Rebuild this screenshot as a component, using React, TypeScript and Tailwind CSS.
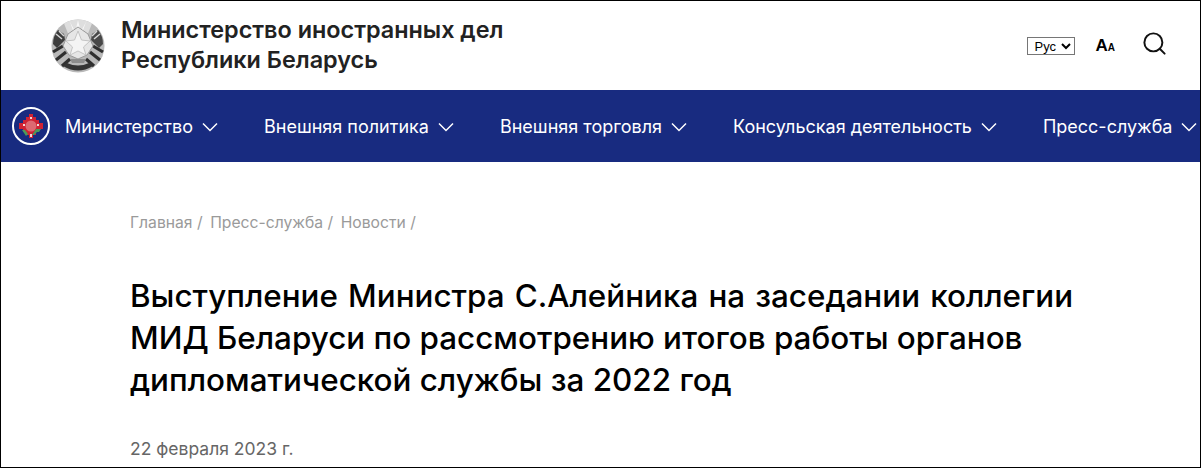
import { Search } from "lucide-react";

const inter = "font-['Inter',sans-serif]";

const navItems = [
  "Министерство",
  "Внешняя политика",
  "Внешняя торговля",
  "Консульская деятельность",
  "Пресс-служба",
];

function Chevron() {
  return (
    <svg width="16" height="10" viewBox="0 0 16 10" fill="none" className="shrink-0">
      <path d="M1 1.5 L8 8.5 L15 1.5" stroke="white" strokeWidth="1.5" />
    </svg>
  );
}

function Emblem() {
  return (
    <svg width="54" height="54" viewBox="0 0 54 54" className="shrink-0">
      <circle cx="27" cy="27" r="26.5" fill="#b9b9b9" />
      {/* rays over the top */}
      <path d="M27 0.5 A26.5 26.5 0 0 1 41 4.5 L36 17 H18 L13 4.5 A26.5 26.5 0 0 1 27 0.5Z" fill="#dedede" />
      <path d="M27 1 L24 14 H30Z M19 3 L23 14 H25Z M35 3 L31 14 H29Z" fill="#f7f7f7" />
      {/* globe patches */}
      <path d="M2 25 Q2 17 7 11 L13 15 L14 21 L6 29Z" fill="#3d3d3d" />
      <path d="M52 25 Q52 17 47 11 L41 15 L40 21 L48 29Z" fill="#484848" />
      <path d="M5 15 L11 20 M8 12 L13 17" stroke="#d5d5d5" strokeWidth="1.5" />
      <path d="M49 15 L43 20 M46 12 L41 17" stroke="#d5d5d5" strokeWidth="1.5" />
      {/* wheat stripes */}
      <g stroke="#2f2f2f" strokeWidth="3.2" fill="none">
        <path d="M2 33 L12 27" />
        <path d="M5 41 L15 33" />
        <path d="M11 47 L19 40" />
        <path d="M52 33 L42 27" />
        <path d="M49 41 L39 33" />
        <path d="M43 47 L35 40" />
      </g>
      {/* map and star */}
      <path d="M27 8 L37 15 L42 27 L36 36 L27 40 L18 36 L12 27 L17 15Z" fill="#e6e6e6" stroke="#9a9a9a" strokeWidth="1" />
      <path d="M27 12 L30.5 21 L39 22 L32.5 28 L35 36 L27 32 L19 36 L21.5 28 L15 22 L23.5 21Z" fill="#f4f4f4" stroke="#c4c4c4" strokeWidth="1" />
      <path d="M19 40 H35 L33 44 H21Z" fill="#8d8d8d" />
      {/* ribbon */}
      <path d="M12 47 Q27 56 42 47 L38 44 Q27 49 16 44Z" fill="#343434" />
    </svg>
  );
}

function NavLogo() {
  return (
    <div className="flex h-[38px] w-[38px] shrink-0 items-center justify-center rounded-full border-[2px] border-white">
      <svg width="26" height="26" viewBox="0 0 26 26">
        <path d="M11 1h4v3h3v3h3v3h4v6h-4v3h-3v3h-3v3h-4v-3H8v-3H5v-3H1v-6h4V7h3V4h3z" fill="#cf2233" />
        <circle cx="13" cy="13" r="5.5" fill="#dd6a72" />
        <path d="M18 16h5l-2 3h-2l-3 3h-2z" fill="#4a9a5a" />
        <path d="M4 17h3l3 4-2 2z" fill="#4a9a5a" />
        <path d="M5 11h2v2H5zM19 11h2v2h-2zM12 4h2v2h-2z" fill="#f0d8d8" />
        <path d="M12 21h2v3h-2z" fill="#f0d8d8" />
      </svg>
    </div>
  );
}

export default function App() {
  return (
    <div className={`${inter} h-[468px] w-[1201px] overflow-hidden border border-black bg-white`}>
      <header className="flex h-[89px] items-center pl-[50px] pr-[32px]">
        <Emblem />
        <div className="mb-[2px] ml-[16px] text-[23.4px] font-semibold leading-[30px] text-[#222]">
          Министерство иностранных дел
          <br />
          Республики Беларусь
        </div>
        <div className="ml-auto flex items-center">
          <select className="mr-[1px] h-[18px] w-[48px] border border-[#767676] bg-white pl-[2px] font-['Liberation_Sans',sans-serif] text-[13px] leading-none text-black">
            <option>Рус</option>
          </select>
          <div className="ml-[19px] flex items-baseline font-['Liberation_Sans',sans-serif] font-bold text-black">
            <span className="text-[17px]">A</span>
            <span className="text-[10px]">A</span>
          </div>
          <Search className="mb-[4px] ml-[26px] text-[#111]" size={27} strokeWidth={1.75} />
        </div>
      </header>
      <nav className="flex h-[72px] items-center overflow-hidden whitespace-nowrap bg-[#182b80] pl-[11px] text-white">
        <NavLogo />
        <ul className="ml-[15px] mt-[1px] flex items-center gap-[46px]">
          {navItems.map((item) => (
            <li key={item} className="flex items-center gap-[9px] text-[18px]">
              {item}
              <Chevron />
            </li>
          ))}
        </ul>
      </nav>
      <main className="pl-[129px] pt-[51px]">
        <div className="flex gap-[7.5px] text-[15.7px] leading-[20px] text-[#9a9a9a]">
          <span>Главная /</span>
          <span>Пресс-служба /</span>
          <span>Новости /</span>
        </div>
        <h1 className="mt-[42px] w-[960px] text-[31.4px] font-medium leading-[42px] text-black">
          <span className="[word-spacing:1.8px]">Выступление Министра С.Алейника на заседании коллегии</span> МИД Беларуси по рассмотрению итогов работы органов дипломатической службы за 2022 год
        </h1>
        <div className="mt-[36px] text-[17.5px] leading-[24px] text-[#666]">22 февраля 2023 г.</div>
      </main>
    </div>
  );
}
